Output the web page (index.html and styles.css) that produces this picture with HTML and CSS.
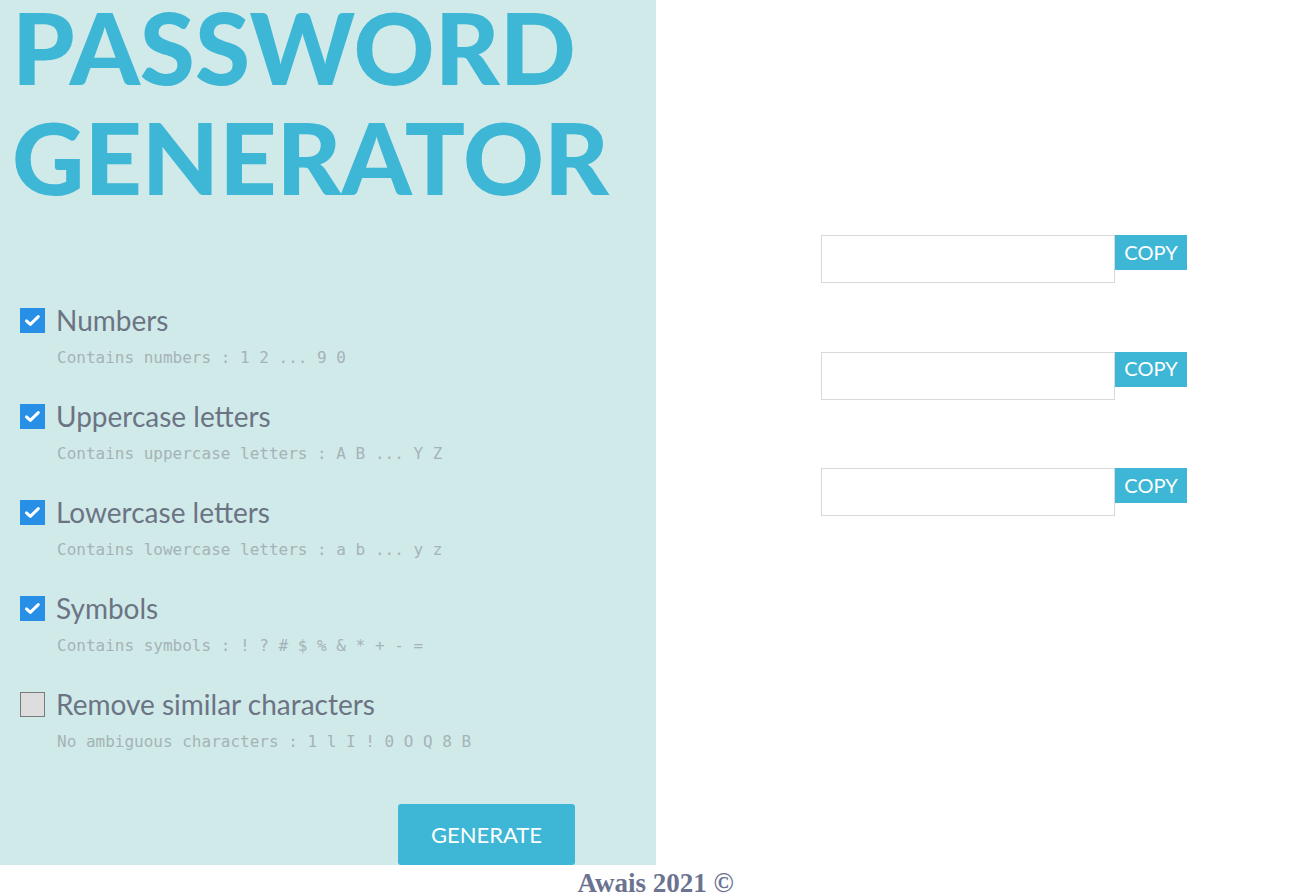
FILE: index.html
```html
<!DOCTYPE html>
<html lang="en">
<head>
<meta charset="utf-8">
<title>Password Generator</title>
<link rel="stylesheet" href="styles.css">
</head>
<body>
<main class="layout">
  <section class="panel">
    <h1 class="title"><span class="line line-1">PASSWORD</span><span class="line line-2">GENERATOR</span></h1>
    <div class="options">
      <div class="option">
        <label class="head"><span class="box checked"><svg viewBox="0 0 25 25" width="25" height="25"><path d="M6.5 12.8 L10.3 16.3 L18.3 8.6" fill="none" stroke="#fff" stroke-width="3" stroke-linecap="round" stroke-linejoin="round"/></svg></span><span class="label">Numbers</span></label>
        <p class="desc">Contains numbers : 1 2 ... 9 0</p>
      </div>
      <div class="option">
        <label class="head"><span class="box checked"><svg viewBox="0 0 25 25" width="25" height="25"><path d="M6.5 12.8 L10.3 16.3 L18.3 8.6" fill="none" stroke="#fff" stroke-width="3" stroke-linecap="round" stroke-linejoin="round"/></svg></span><span class="label">Uppercase letters</span></label>
        <p class="desc">Contains uppercase letters : A B ... Y Z</p>
      </div>
      <div class="option">
        <label class="head"><span class="box checked"><svg viewBox="0 0 25 25" width="25" height="25"><path d="M6.5 12.8 L10.3 16.3 L18.3 8.6" fill="none" stroke="#fff" stroke-width="3" stroke-linecap="round" stroke-linejoin="round"/></svg></span><span class="label">Lowercase letters</span></label>
        <p class="desc">Contains lowercase letters : a b ... y z</p>
      </div>
      <div class="option">
        <label class="head"><span class="box checked"><svg viewBox="0 0 25 25" width="25" height="25"><path d="M6.5 12.8 L10.3 16.3 L18.3 8.6" fill="none" stroke="#fff" stroke-width="3" stroke-linecap="round" stroke-linejoin="round"/></svg></span><span class="label">Symbols</span></label>
        <p class="desc">Contains symbols : ! ? # $ % &amp; * + - =</p>
      </div>
      <div class="option">
        <label class="head"><span class="box"></span><span class="label">Remove similar characters</span></label>
        <p class="desc">No ambiguous characters : 1 l I ! 0 O Q 8 B</p>
      </div>
    </div>
    <div class="actions">
      <button class="generate" type="button">GENERATE</button>
    </div>
  </section>
  <section class="results">
    <div class="result"><input class="field" type="text"><button class="copy" type="button">COPY</button></div>
    <div class="result"><input class="field" type="text"><button class="copy" type="button">COPY</button></div>
    <div class="result"><input class="field" type="text"><button class="copy" type="button">COPY</button></div>
  </section>
</main>
<footer class="footer">Awais 2021 ©</footer>
</body>
</html>
```
FILE: styles.css
```css
html, body {
  margin: 0;
  padding: 0;
  background: #ffffff;
}
body {
  font-family: Lato, "Noto Sans", sans-serif;
  overflow: hidden;
}
.layout {
  display: flex;
  align-items: flex-start;
}
.panel {
  width: 656px;
  height: 865px;
  background: #d0eaea;
  box-sizing: border-box;
  overflow: hidden;
}
.title {
  margin: 0;
  padding-left: 12px;
  font-family: Lato, sans-serif;
  font-weight: 900;
  font-size: 100px;
  color: #3db7d5;
}
.line {
  display: block;
}
.line-1 {
  line-height: 92px;
}
.line-2 {
  line-height: 128px;
}
.options {
  margin-top: 83px;
  padding-left: 20px;
}
.option {
  height: 96px;
}
.head {
  display: flex;
  align-items: center;
  gap: 11px;
  height: 34px;
}
.box {
  width: 25px;
  height: 25px;
  box-sizing: border-box;
  border: 1px solid #7a7a7a;
  background: #dddddd;
  display: block;
}
.box.checked {
  border: none;
  background: #2790e6;
}
.box svg {
  display: block;
}
.label {
  font-size: 28px;
  line-height: 34px;
  color: #6c7484;
}
.desc {
  margin: 11px 0 0 37px;
  font-family: "DejaVu Sans Mono", "Liberation Mono", monospace;
  font-size: 16px;
  line-height: 20px;
  color: #a5b3b6;
}
.actions {
  padding-left: 398px;
  margin-top: 21px;
}
.generate {
  width: 177px;
  height: 61px;
  border: none;
  border-radius: 3px;
  background: #3db7d5;
  color: #ffffff;
  font-family: Lato, sans-serif;
  font-size: 22px;
  padding: 0;
  display: block;
}
.results {
  padding-left: 165px;
  padding-top: 235px;
  display: flex;
  flex-direction: column;
  gap: 68.5px;
}
.result {
  display: flex;
  align-items: flex-start;
}
.field {
  width: 294px;
  height: 48px;
  box-sizing: border-box;
  border: 1px solid #d9d9d9;
  margin: 0;
  padding: 0 8px;
  background: #fff;
}
.copy {
  width: 72px;
  height: 35px;
  border: none;
  padding: 0 0 2px;
  background: #3db7d5;
  color: #fff;
  font-family: Lato, sans-serif;
  font-size: 20px;
}
.footer {
  text-align: center;
  font-family: "Liberation Serif", serif;
  font-weight: 700;
  font-size: 27px;
  line-height: 24px;
  padding-top: 6px;
  color: #6b7390;
}
```
